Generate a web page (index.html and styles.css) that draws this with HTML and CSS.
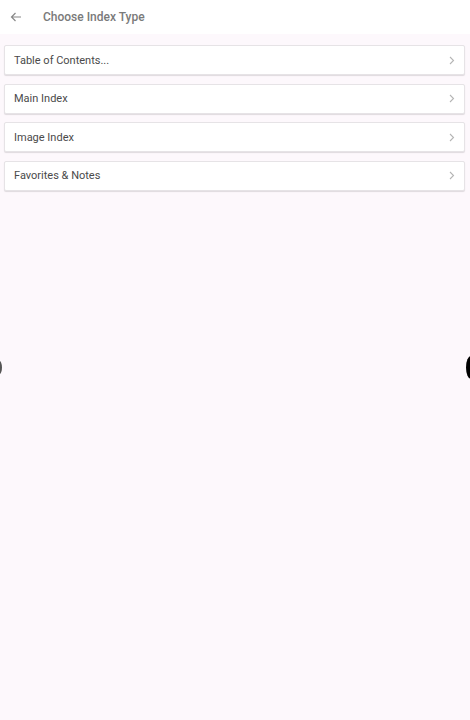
FILE: index.html
```html
<!DOCTYPE html>
<html lang="en">

<head>
    <meta charset="UTF-8">
    <meta name="viewport" content="width=device-width, initial-scale=1.0">
    <title>Choose Index Type</title>
    <link rel="stylesheet" href="styles.css">
</head>

<body>
    <div class="toolbar">
        <svg class="back" width="12" height="10" viewBox="0 0 12 10">
            <path d="M11 5H1.5M5.5 1L1.5 5l4 4" fill="none" stroke="#888" stroke-width="1.2" />
        </svg>
        <span class="title">Choose Index Type</span>
    </div>

    <div class="content">
        <div class="item"><span>Table of Contents...</span>
            <svg class="chevron" width="6" height="9" viewBox="0 0 6 9"><path d="M1 1l3.5 3.5L1 8" fill="none" stroke="#b5b5b5" stroke-width="1.1" /></svg>
        </div>
        <div class="item"><span>Main Index</span>
            <svg class="chevron" width="6" height="9" viewBox="0 0 6 9"><path d="M1 1l3.5 3.5L1 8" fill="none" stroke="#b5b5b5" stroke-width="1.1" /></svg>
        </div>
        <div class="item"><span>Image Index</span>
            <svg class="chevron" width="6" height="9" viewBox="0 0 6 9"><path d="M1 1l3.5 3.5L1 8" fill="none" stroke="#b5b5b5" stroke-width="1.1" /></svg>
        </div>
        <div class="item"><span>Favorites &amp; Notes</span>
            <svg class="chevron" width="6" height="9" viewBox="0 0 6 9"><path d="M1 1l3.5 3.5L1 8" fill="none" stroke="#b5b5b5" stroke-width="1.1" /></svg>
        </div>
    </div>

    <div class="edge edge-left"></div>
    <div class="edge edge-right"></div>
</body>

</html>
```

FILE: styles.css
```css
body {
    margin: 0;
    padding: 0;
    font-family: Roboto, "Liberation Sans", sans-serif;
    background-color: #fdf8fc;
    height: 720px;
    overflow: hidden;
}

.toolbar {
    height: 34px;
    background-color: white;
    display: flex;
    align-items: center;
    padding-left: 10px;
}

.back {
    margin-right: 21px;
}

.title {
    color: #7a7a7a;
    font-size: 12px;
    font-weight: 500;
}

.content {
    padding: 11px 5px 0 4px;
    display: flex;
    flex-direction: column;
    gap: 8.5px;
}

.item {
    height: 28px;
    background-color: white;
    border: 1px solid #e6e3e6;
    border-radius: 2px;
    box-shadow: 0 1px 1px rgba(0, 0, 0, 0.12);
    display: flex;
    align-items: center;
    justify-content: space-between;
    padding: 0 9px 0 9px;
    font-size: 11px;
    color: #4a4a4a;
}

.edge {
    position: absolute;
    background-color: black;
    border-radius: 50%;
}

.edge-left {
    left: -3px;
    top: 361px;
    width: 5px;
    height: 13px;
    background-color: #555;
}

.edge-right {
    left: 466px;
    top: 356px;
    width: 10px;
    height: 23px;
}
```
